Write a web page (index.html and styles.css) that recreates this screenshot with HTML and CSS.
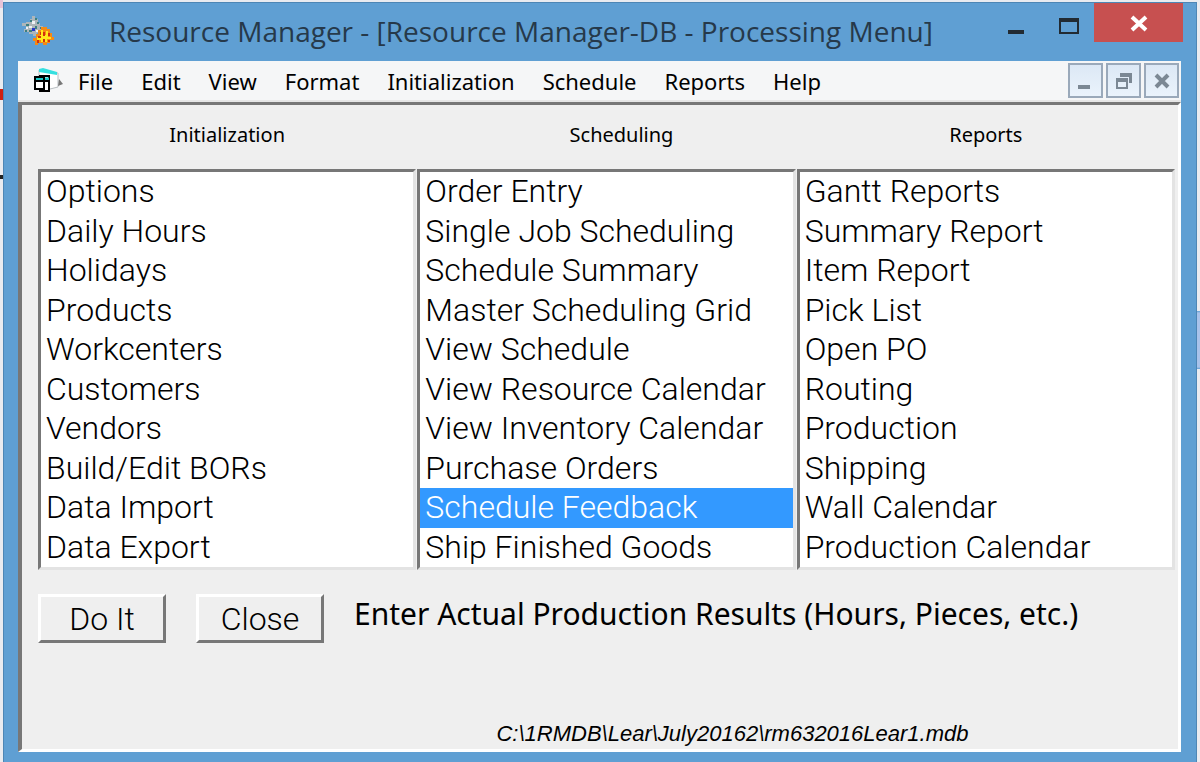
FILE: index.html
```html
<!DOCTYPE html>
<html lang="en">

<head>
    <meta charset="UTF-8">
    <meta name="viewport" content="width=device-width, initial-scale=1.0">
    <title>Resource Manager</title>
    <link rel="stylesheet" href="styles.css">
</head>

<body>
    <div class="window">
        <header class="titlebar">
            <svg class="app-icon" width="34" height="36" viewBox="0 0 34 36">
                <path d="M11 2h3v3h3v4h2v3h3v3h-2v4h-4v3h-4v-2H8v-2H3v-3h2v-3H1v-3h4V8h4V5h2z" fill="#aeb6ba" />
                <path d="M9 6h2v2H9zM5 10h3v2H5zM14 12h2v3h-2zM8 16h3v2H8zM16 8h2v2h-2zM14 4h2v2h-2zM19 13h2v2h-2zM4 16h2v2H4z" fill="#3d7f80" />
                <path d="M11 7h3v3h-3zM8 12h3v2H8zM5 13h2v2H5zM15 16h3v2h-3z" fill="#eef2f4" />
                <path d="M11 14h3v3h-3z" fill="#2638c8" />
                <path d="M20 13h6v2h3v4h2v4h2v3h-4v3h-3v2h-4v-2h-5v2h-3v-4h-2v-3h3v-4h2v-4h3z" fill="#f58a14" />
                <path d="M20 16h2v5h3v-4h2v6h3v2h-4v3h-6v-2h-4v-3h3v-3h1z" fill="#ffe81c" />
                <path d="M22 18h2v4h-2zM17 22h3v2h-3zM27 19h2v3h-2zM22 25h2v3h-2zM16 26h2v3h-2zM27 26h2v2h-2zM19 18h1v3h-1z" fill="#d2300d" />
            </svg>
            <h1>Resource Manager - [Resource Manager-DB - Processing Menu]</h1>
            <div class="caption-buttons">
                <button type="button" aria-label="Minimize">
                    <svg width="20" height="32"><path d="M2 25h16" stroke="#222b33" stroke-width="4" /></svg>
                </button>
                <button type="button" aria-label="Maximize">
                    <svg width="20" height="32"><path d="M1 12h18v14H1z" fill="none" stroke="#222b33" stroke-width="2" /><path d="M0 13h20" stroke="#222b33" stroke-width="4" /></svg>
                </button>
                <button type="button" class="close" aria-label="Close window">
                    <svg width="20" height="20"><path d="M3 4l14 13M17 4L3 17" stroke="#fff" stroke-width="4" /></svg>
                </button>
            </div>
        </header>

        <nav class="menubar">
            <svg class="form-icon" width="30" height="28" viewBox="0 0 30 28">
                <path d="M6 3l19 3v14l-8 2-11-3z" fill="#fff" stroke="#b9bec2" />
                <path d="M6 2l4-1 14 4v3L6 5z" fill="#35e0e0" />
                <path d="M26 12l4 5-5 2z" fill="#777" />
                <path d="M7 9h9v15H7z" fill="#fff" stroke="#000" stroke-width="2" />
                <path d="M8 12h8" stroke="#1ec8c8" stroke-width="3" />
                <path d="M2 10h9v12H2z" fill="#fff" stroke="#000" stroke-width="2" />
                <path d="M3 12h7" stroke="#1ec8c8" stroke-width="2" />
                <path d="M2 14h14" stroke="#000" stroke-width="2" />
            </svg>
            <button type="button">File</button>
            <button type="button">Edit</button>
            <button type="button">View</button>
            <button type="button">Format</button>
            <button type="button">Initialization</button>
            <button type="button">Schedule</button>
            <button type="button">Reports</button>
            <button type="button">Help</button>
            <div class="child-buttons">
                <button type="button" aria-label="Minimize form">
                    <svg width="31" height="31"><path d="M8 22h12" stroke="#7b8894" stroke-width="4" /></svg>
                </button>
                <button type="button" aria-label="Restore form">
                    <svg width="31" height="31"><path d="M12 8h12v10h-3v-6h-9z" fill="#7b8894" /><path d="M9 14h10v9H9z" fill="#e6f0fa" stroke="#7b8894" stroke-width="2" /><path d="M8 15h12" stroke="#7b8894" stroke-width="4" /></svg>
                </button>
                <button type="button" aria-label="Close form">
                    <svg width="31" height="31"><path d="M10 10l12 12M22 10L10 22" stroke="#7b8894" stroke-width="4" /></svg>
                </button>
            </div>
        </nav>

        <main class="panel">
            <div class="lists">
                <div class="column">
                    <label for="initialization">Initialization</label>
                    <select id="initialization" size="10">
                        <option>Options</option>
                        <option>Daily Hours</option>
                        <option>Holidays</option>
                        <option>Products</option>
                        <option>Workcenters</option>
                        <option>Customers</option>
                        <option>Vendors</option>
                        <option>Build/Edit BORs</option>
                        <option>Data Import</option>
                        <option>Data Export</option>
                    </select>
                </div>
                <div class="column scheduling">
                    <label for="scheduling">Scheduling</label>
                    <select id="scheduling" size="10">
                        <option>Order Entry</option>
                        <option>Single Job Scheduling</option>
                        <option>Schedule Summary</option>
                        <option>Master Scheduling Grid</option>
                        <option>View Schedule</option>
                        <option>View Resource Calendar</option>
                        <option>View Inventory Calendar</option>
                        <option>Purchase Orders</option>
                        <option selected>Schedule Feedback</option>
                        <option>Ship Finished Goods</option>
                    </select>
                </div>
                <div class="column">
                    <label for="reports">Reports</label>
                    <select id="reports" size="10">
                        <option>Gantt Reports</option>
                        <option>Summary Report</option>
                        <option>Item Report</option>
                        <option>Pick List</option>
                        <option>Open PO</option>
                        <option>Routing</option>
                        <option>Production</option>
                        <option>Shipping</option>
                        <option>Wall Calendar</option>
                        <option>Production Calendar</option>
                    </select>
                </div>
            </div>
            <div class="actions">
                <button type="button">Do It</button>
                <button type="button">Close</button>
                <p>Enter Actual Production Results (Hours, Pieces, etc.)</p>
            </div>
            <p class="path">C:\1RMDB\Lear\July20162\rm632016Lear1.mdb</p>
        </main>
    </div>
</body>

</html>
```
FILE: styles.css
```css
* {
    box-sizing: border-box;
}

/* slivers of the windows behind show at the left and right edges */
body {
    margin: 0;
    padding: 2px 3px 0;
    min-height: 100vh;
    display: flex;
    background-color: #e9ebf0;
    background-image:
        linear-gradient(#e8c4d8, #e8c4d8),
        linear-gradient(#d02010, #d02010),
        linear-gradient(#222, #222),
        linear-gradient(#5f9fd3, #a9c3ea 2px, #a9c3ea 56px, #5f9fd3);
    background-repeat: no-repeat;
    background-position: 0 0, 0 89px, 0 175px, right 311px;
    background-size: 3px 8px, 3px 11px, 3px 4px, 3px 58px;
    font-family: "Noto Sans", sans-serif;
    color: #000;
}

h1,
p {
    margin: 0;
    font-weight: normal;
}

button {
    font: inherit;
    color: inherit;
    padding: 0;
    border: 0;
    background: none;
}

svg {
    display: block;
}

.window {
    flex: 1;
    display: flex;
    flex-direction: column;
    padding: 0 15px 10px 14px;
    background-color: #5f9fd3;
    border: 1px solid #4d86b5;
    border-bottom: 0;
}

.titlebar {
    display: flex;
    align-items: flex-start;
    height: 58px;
    margin-right: -2px;
}

.app-icon {
    margin: 11px 0 0 3px;
}

.titlebar h1 {
    flex: 1;
    margin-left: 54px;
    font-family: "Open Sans", sans-serif;
    font-size: 28px;
    line-height: 56px;
    color: #26394a;
    white-space: nowrap;
}

.caption-buttons {
    display: flex;
    gap: 33px;
}

.caption-buttons .close {
    display: flex;
    align-items: center;
    justify-content: center;
    width: 89px;
    height: 39px;
    margin-left: -18px;
    background-color: #c75050;
}

.menubar {
    display: flex;
    align-items: center;
    gap: 28px;
    height: 41px;
    padding: 0 2px 0 15px;
    background-color: #f5f6f7;
    border-bottom: 2px solid #e6e6e6;
    font-size: 22px;
}

.form-icon {
    margin-right: -13px;
}

.child-buttons {
    display: flex;
    gap: 3px;
    margin-left: auto;
}

.child-buttons button {
    display: flex;
    width: 35px;
    height: 35px;
    border: 2px solid #9aa9ba;
    background: linear-gradient(#dce8f5, #eaf3fc);
}

.panel {
    flex: 1;
    display: flex;
    flex-direction: column;
    padding: 0 3px 3px 16px;
    background-color: #efefef;
    border: 3px solid;
    border-color: #777 #fff #fff #777;
    border-left-width: 4px;
}

.lists {
    display: grid;
    grid-template-columns: repeat(3, 1fr);
    gap: 1px;
}

.column {
    display: flex;
    flex-direction: column;
    text-align: center;
}

.column label {
    height: 64px;
    font-size: 20px;
    line-height: 60px;
}

.scheduling label {
    padding-left: 30px;
}

select {
    appearance: none;
    width: 100%;
    height: 401px;
    margin: 0;
    padding: 0;
    border: 3px solid;
    border-color: #777 #e3e3e3 #e3e3e3 #777;
    border-radius: 0;
    background-color: #fff;
    color: #000;
    font-family: Roboto, sans-serif;
    font-size: 32px;
    overflow: hidden;
    outline: 0;
}

option {
    height: 40px;
    min-height: 0;
    padding: 0 5px;
    font-weight: 300;
    line-height: 42px;
}

option:nth-child(even) {
    height: 39px;
}

option:checked {
    color: #fff;
    background: linear-gradient(#3399ff, #3399ff);
}

.actions {
    display: flex;
    gap: 30px;
    margin-top: 24px;
}

.actions button {
    width: 128px;
    height: 49px;
    border: 3px solid;
    border-color: #fff #777 #777 #fff;
    font-family: Roboto, sans-serif;
    font-size: 32px;
    font-weight: 300;
}

.actions p {
    font-size: 30px;
    line-height: 40px;
}

.path {
    margin-top: auto;
    padding-left: 252px;
    text-align: center;
    font-family: "Liberation Sans", sans-serif;
    font-size: 22px;
    font-style: italic;
    line-height: 24px;
}
```
